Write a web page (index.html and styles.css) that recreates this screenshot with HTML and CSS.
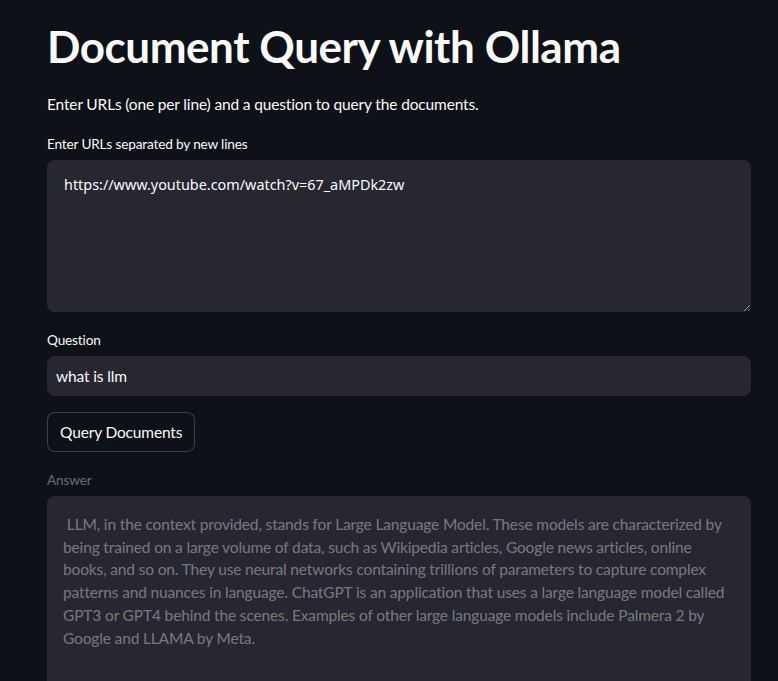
FILE: index.html
```html
<!DOCTYPE html>
<html lang="en">
<head>
<meta charset="utf-8">
<title>Document Query with Ollama</title>
<link rel="stylesheet" href="styles.css">
</head>
<body>
<main class="main">
  <h1 class="title">Document Query with Ollama</h1>
  <p class="intro">Enter URLs (one per line) and a question to query the documents.</p>

  <div class="field field-urls">
    <label class="label" for="urls">Enter URLs separated by new lines</label>
    <textarea id="urls" class="textarea" spellcheck="false">https://www.youtube.com/watch?v=67_aMPDk2zw</textarea>
  </div>

  <div class="field field-question">
    <label class="label" for="question">Question</label>
    <input id="question" class="input" type="text" value="what is llm" spellcheck="false">
  </div>

  <button class="button" type="button">Query Documents</button>

  <div class="field field-answer">
    <div class="label label-disabled">Answer</div>
    <div class="answer"><span class="line">&nbsp;LLM, in the context provided, stands for Large Language Model. These models are characterized by</span><span class="line">being trained on a large volume of data, such as Wikipedia articles, Google news articles, online</span><span class="line">books, and so on. They use neural networks containing trillions of parameters to capture complex</span><span class="line">patterns and nuances in language. ChatGPT is an application that uses a large language model called</span><span class="line">GPT3 or GPT4 behind the scenes. Examples of other large language models include Palmera 2 by</span><span class="line">Google and LLAMA by Meta.</span></div>
  </div>
</main>
</body>
</html>
```

FILE: styles.css
```css
* { box-sizing: border-box; }

html, body {
  margin: 0;
  padding: 0;
  background: #0e1117;
  color: #fafafa;
  font-family: "Lato", "Liberation Sans", sans-serif;
  overflow: hidden;
}

.main {
  width: 704px;
  margin-left: 47px;
  padding-top: 20px;
  display: flex;
  flex-direction: column;
}

.title {
  margin: 0;
  font-size: 44px;
  line-height: 52px;
  font-weight: 700;
  letter-spacing: -0.45px;
}

.intro {
  margin: 20px 0 0;
  font-size: 15.5px;
  letter-spacing: -0.15px;
  line-height: 24px;
}

.field {
  display: flex;
  flex-direction: column;
}

.field-urls { margin-top: 20px; }
.field-question { margin-top: 20px; }
.field-answer { margin-top: 20px; }

.label {
  font-size: 13.6px;
  letter-spacing: -0.15px;
  line-height: 16px;
  margin-bottom: 8px;
  color: #fafafa;
}

.label-disabled { color: rgba(250, 250, 250, 0.4); }

.textarea {
  height: 152px;
  background: #262730;
  color: #fafafa;
  border: none;
  border-radius: 8px;
  padding: 14px 17px;
  font-family: "Noto Sans", "Open Sans", sans-serif;
  font-size: 14.4px;
  line-height: 22px;
  resize: vertical;
  outline: none;
  color-scheme: dark;
}

.input {
  height: 40px;
  background: #262730;
  color: #fafafa;
  border: none;
  border-radius: 8px;
  padding: 0 9px;
  font-family: inherit;
  font-size: 15.5px;
  letter-spacing: -0.15px;
  outline: none;
}

.button {
  align-self: flex-start;
  margin-top: 16px;
  height: 40px;
  padding: 0 12px;
  background: #0e1117;
  color: #fafafa;
  border: 1px solid rgba(250, 250, 250, 0.2);
  border-radius: 8px;
  font-family: inherit;
  font-size: 15.5px;
  letter-spacing: -0.15px;
}

.answer {
  height: 200px;
  background: #262730;
  border-radius: 8px;
  padding: 17px 16px;
  color: rgba(250, 250, 250, 0.4);
  font-size: 15.5px;
  letter-spacing: -0.15px;
  line-height: 22.7px;
}

.line {
  display: block;
  white-space: nowrap;
}
```
